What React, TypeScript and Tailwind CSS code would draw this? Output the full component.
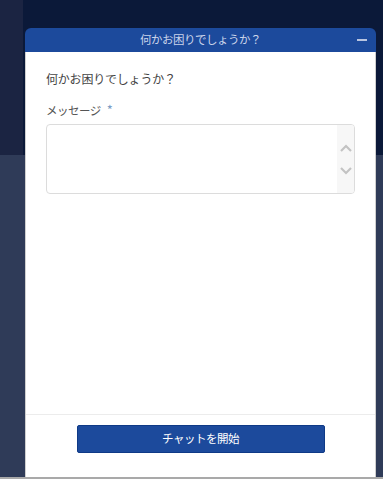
import React from "react";

const font = { fontFamily: '"Noto Sans CJK JP", "Noto Sans", sans-serif' };

export default function App() {
  return (
    <div className="relative w-[383px] h-[479px] overflow-hidden" style={font}>
      <div className="flex flex-col h-full">
        <div className="flex h-[155px]">
          <div className="w-[23px] bg-[#1b2442]" />
          <div className="flex-1 bg-[#0b1939]" />
        </div>
        <div className="flex-1 bg-[#2f3b58]" />
        <div className="h-[2px] bg-[#a9a9a9]" />
      </div>

      <div className="absolute left-[25px] top-[28px] w-[351px] h-[449px] flex flex-col">
        <div className="h-[24px] shrink-0 rounded-t-[6px] bg-[#1c4a9c] flex items-center justify-center relative">
          <span className="text-[11.5px] leading-none text-[#cbd4ea] tracking-[-0.5px]">何かお困りでしょうか？</span>
          <div className="absolute right-[9px] top-[11px] w-[10px] h-[2px] bg-[#b9c5e0]" />
        </div>
        <div className="flex-1 flex flex-col bg-white border-x border-[#cfcfcf]">
          <div className="flex-1 px-5 pt-[19px]">
            <div className="text-[12px] leading-[16px] text-[#444] tracking-[-0.2px]">何かお困りでしょうか？</div>
            <div className="mt-[15px] flex items-center gap-[6px] text-[11.5px] leading-[16px] text-[#555] tracking-[-0.5px]">
              <span>メッセージ</span>
              <span className="text-[13px] text-[#7a9cc6]">*</span>
            </div>
            <div className="mt-[6px] h-[70px] rounded-[4px] border border-[#dcdcdc] flex overflow-hidden">
              <div className="flex-1" />
              <div className="w-[17px] bg-[#f7f7f7] flex flex-col items-center justify-center gap-[15px]">
                <svg width="12" height="8" viewBox="0 0 12 8">
                  <path d="M1 7 L6 2 L11 7" fill="none" stroke="#c3c3c3" strokeWidth="2.2" />
                </svg>
                <svg width="12" height="8" viewBox="0 0 12 8">
                  <path d="M1 1 L6 6 L11 1" fill="none" stroke="#c3c3c3" strokeWidth="2.2" />
                </svg>
              </div>
            </div>
          </div>
          <div className="h-[63px] shrink-0 border-t border-[#ececec] flex justify-center pt-[10px]">
            <button className="w-[248px] h-[28px] rounded-[2px] bg-[#1c4a9c] border border-[#0f3a86] text-white text-[11.5px] tracking-[-0.5px] flex items-center justify-center">
              チャットを開始
            </button>
          </div>
        </div>
      </div>
    </div>
  );
}
